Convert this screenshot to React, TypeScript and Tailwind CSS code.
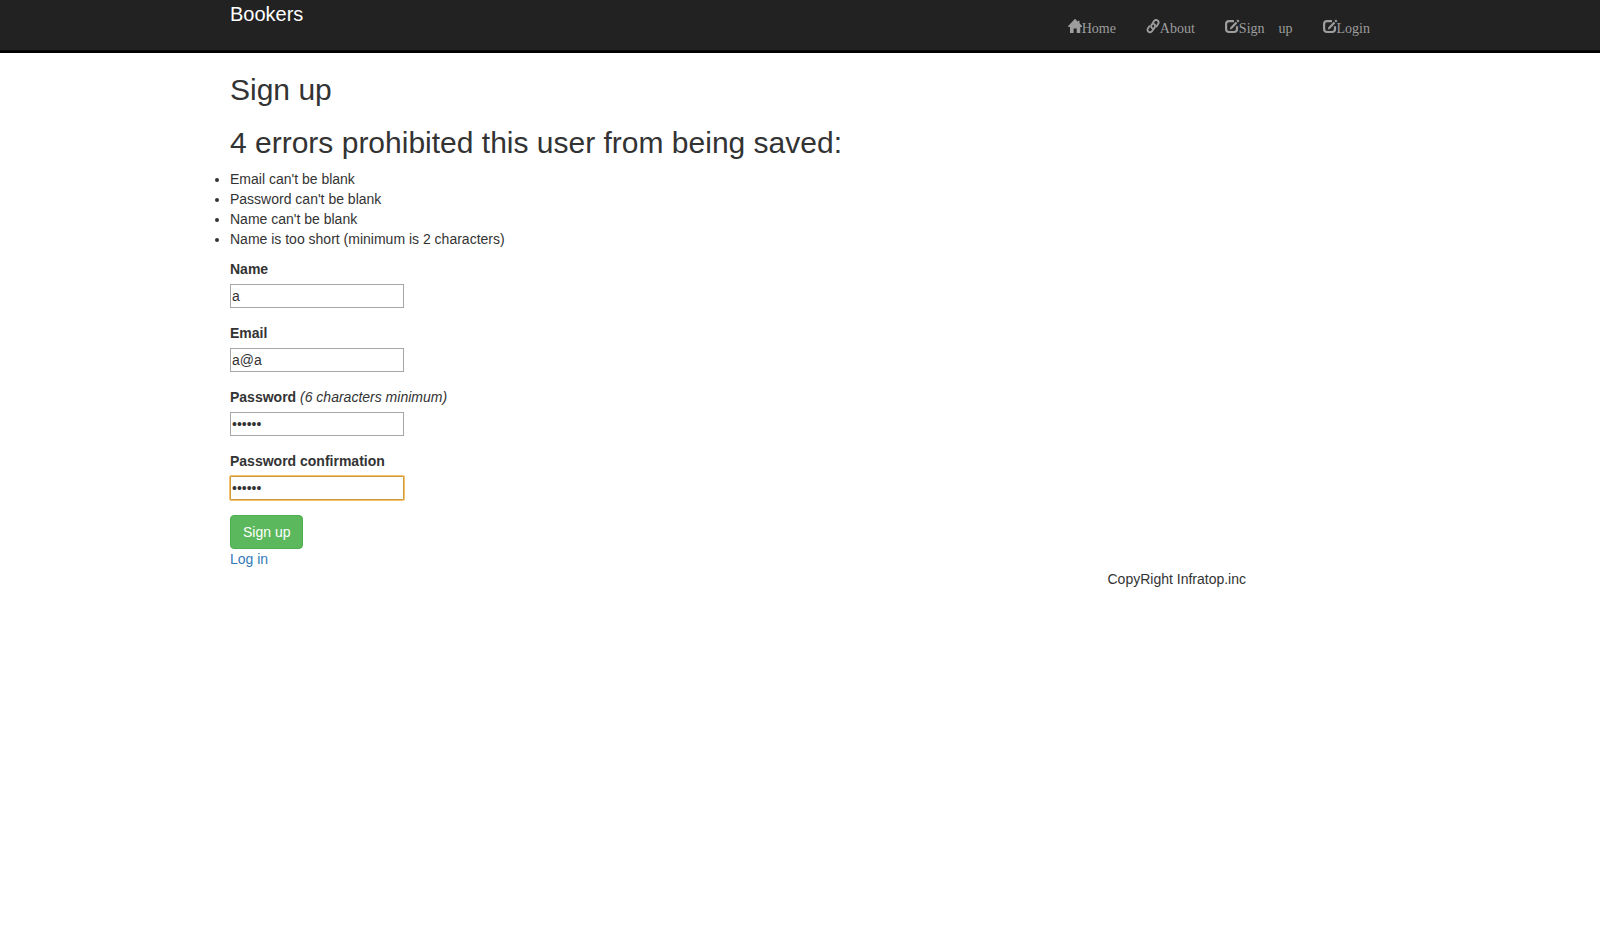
import React from "react";

function HomeIcon() {
  return (
    <svg viewBox="0 0 14 14" className="size-3.5 overflow-visible" fill="currentColor" aria-hidden="true">
      <path d="M7-1Q7.300-1 7.500-.8L10 1.800V.8H11.500V3.300L14 5.900V7.100H12.300V12.700Q12.300 13 12 13H8.700V8.600H5.600V13H2.300Q2 13 2 12.700V7.100H.2V6L6.500-.8Q6.700-1 7-1Z" />
    </svg>
  );
}

function LinkIcon() {
  return (
    <svg viewBox="0 0 14 14" className="size-3.5 overflow-visible" fill="none" stroke="currentColor" strokeWidth="1.850" strokeLinecap="round" strokeLinejoin="round" aria-hidden="true">
      <path d="M6.700 8.500C5.100 7.900 4.700 6.200 5.600 4.900L8 1.100C8.900-.1 10.500-.4 11.600.5C12.700 1.300 12.900 2.800 12.100 4L10.500 6.500" />
      <path d="M7.600 3.900C9.100 4.500 9.600 6.100 8.700 7.400L6.200 11.100C5.300 12.400 3.700 12.700 2.500 11.800C1.400 11 1.100 9.500 2 8.300L3.400 6.300" />
    </svg>
  );
}

function EditIcon() {
  return (
    <svg viewBox="0 0 14 14" className="size-3.5 overflow-visible" fill="none" stroke="currentColor" aria-hidden="true">
      <path strokeWidth="2.200" d="M9 1.100H4.100Q1.100 1.100 1.100 4.100V9Q1.100 12 4.100 12H9Q12 12 12 9V6.300" />
      <path strokeWidth="2.300" d="M6.200 8L11.500 2.500" />
      <path fill="currentColor" stroke="none" d="M5.400 7.100L7.200 8.900L4.800 9.500Z" />
      <path strokeWidth="2.300" d="M12.200 1.700L13.700.2" />
    </svg>
  );
}

const links = [
  { label: "Home", Icon: HomeIcon },
  { label: "About", Icon: LinkIcon },
  { label: "Sign up", Icon: EditIcon },
  { label: "Login", Icon: EditIcon },
];

const errors = [
  "Email can't be blank",
  "Password can't be blank",
  "Name can't be blank",
  "Name is too short (minimum is 2 characters)",
];

const fields = [
  { id: "name", label: "Name", type: "text", value: "a" },
  { id: "email", label: "Email", type: "text", value: "a@a" },
  { id: "password", label: "Password", hint: "(6 characters minimum)", type: "password", value: "aaaaaa" },
  { id: "confirmation", label: "Password confirmation", type: "password", value: "aaaaaa", active: true },
];

export default function App() {
  return (
    <div className="min-h-screen bg-white font-['Liberation_Sans',Arial,sans-serif] text-[14px] leading-5 text-[#333]">
      <header className="border-b-2 border-black">
        <div className="h-[51px] border-b border-[#080808] bg-[#222]">
          <div className="mx-auto flex w-[1170px] items-start justify-between pl-[15px]">
            <a href="#" className="text-[20px] leading-[28px] text-white">Bookers</a>
            <nav className="flex font-['Liberation_Serif',serif] leading-[14px] text-[#9d9d9d] antialiased">
              {links.map(({ label, Icon }) => (
                <a key={label} href="#" className="flex px-[15px] pt-5 [word-spacing:10.5px]">
                  <Icon />
                  <span className="pt-[2px]">{label}</span>
                </a>
              ))}
            </nav>
          </div>
        </div>
      </header>
      <main className="mx-auto w-[1170px] px-[15px]">
        <h2 className="pt-5 text-[30px] leading-[33px]">Sign up</h2>
        <h2 className="mt-5 text-[30px] leading-[33px]">{errors.length} errors prohibited this user from being saved:</h2>
        <ul className="mt-2.5 mb-2.5 list-disc">
          {errors.map((e) => (
            <li key={e}>{e}</li>
          ))}
        </ul>
        <form>
          {fields.map((f) => (
            <div key={f.id} className="mb-[15px]">
              <div className="mb-[5px]">
                <label htmlFor={f.id} className="font-bold">{f.label}</label>
                {f.hint && <em> {f.hint}</em>}
              </div>
              <input
                id={f.id}
                type={f.type}
                defaultValue={f.value}
                className={
                  f.active
                    ? "block h-6 w-[174px] rounded-[1px] border border-[#cf9a3c] bg-white px-px shadow-[0_0_0_1px_#f0c372] outline-none"
                    : "block h-6 w-[174px] border border-[#a6a6a6] bg-white px-px outline-none"
                }
              />
            </div>
          ))}
          <button type="button" className="block h-[34px] rounded border border-[#4cae4c] bg-[#5cb85c] px-3 text-white">Sign up</button>
        </form>
        <a href="#" className="block w-fit text-[#337ab7]">Log in</a>
      </main>
      <footer className="mx-auto w-[1170px] pl-[892.5px]">CopyRight Infratop.inc</footer>
    </div>
  );
}
